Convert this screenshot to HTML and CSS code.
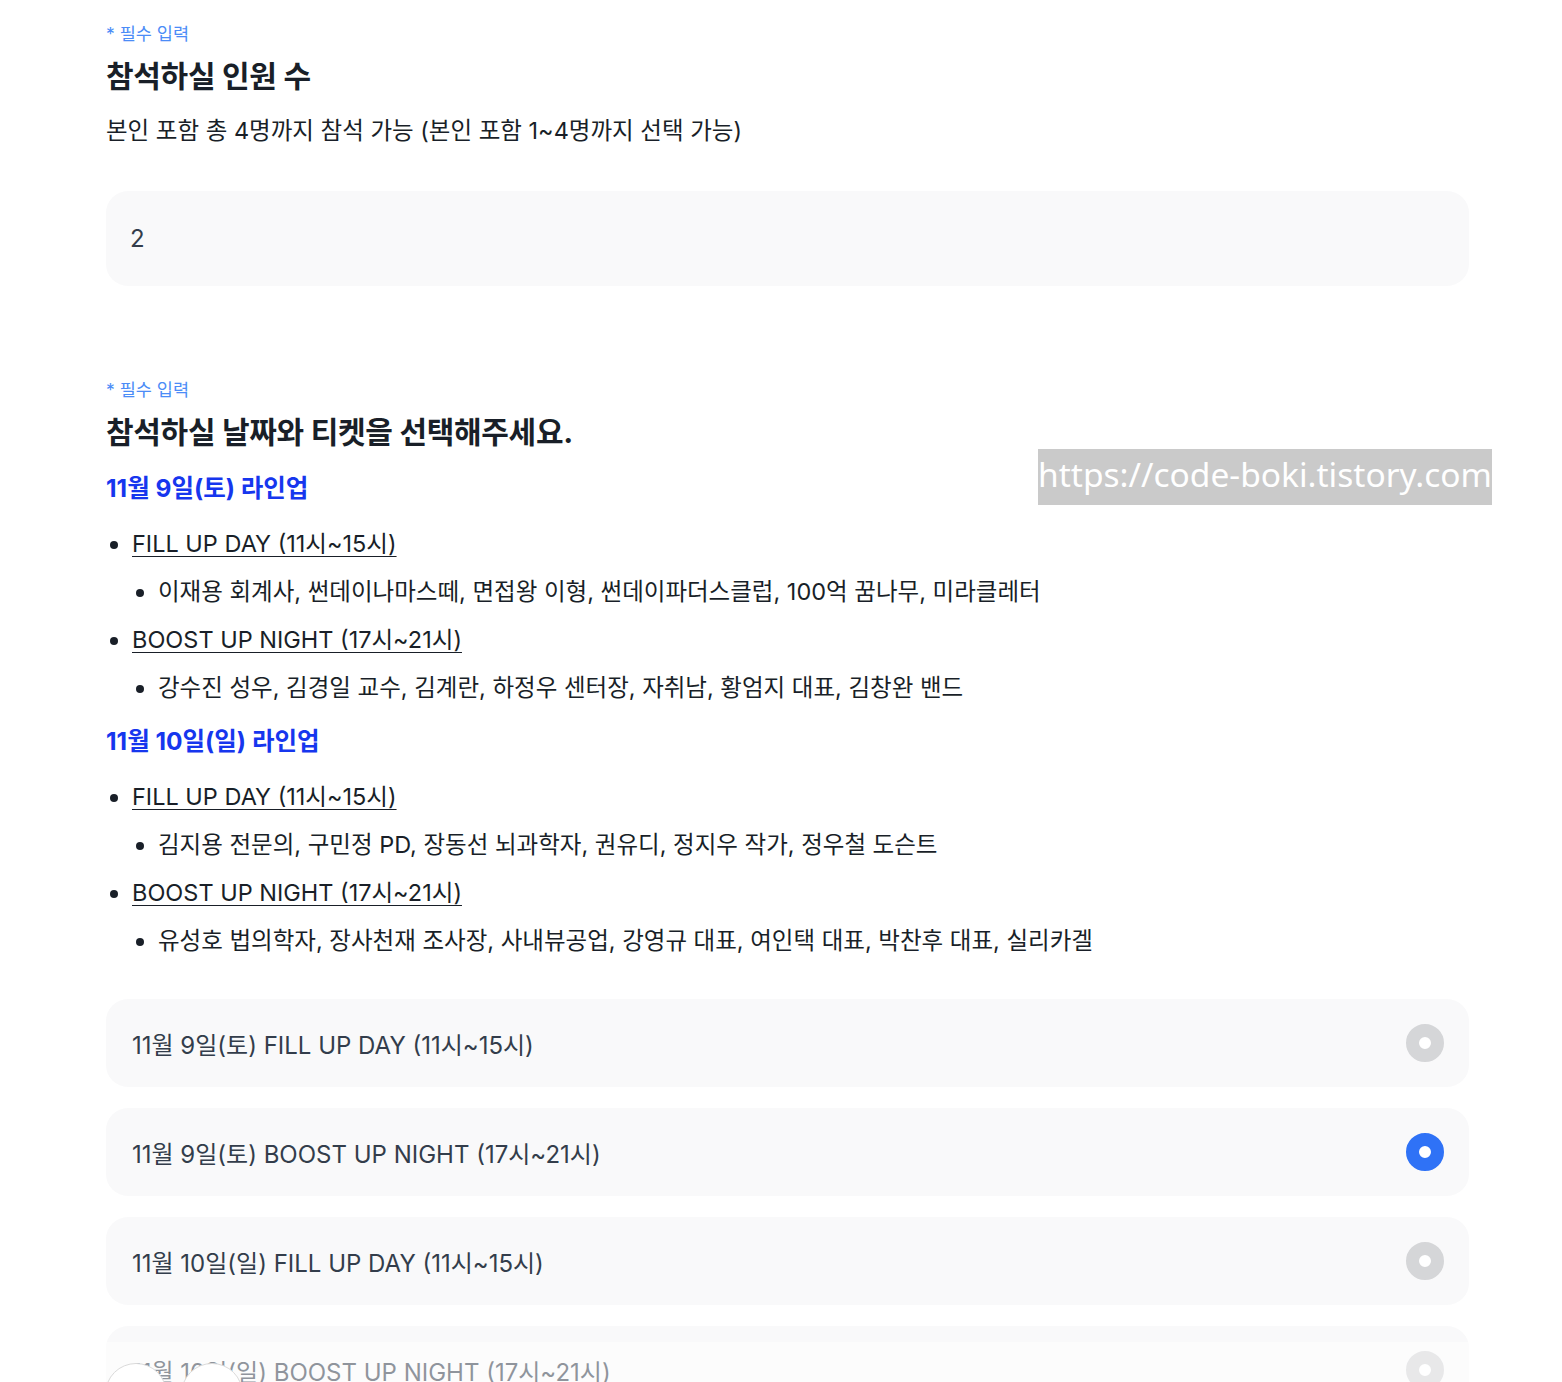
FILE: index.html
```html
<!DOCTYPE html>
<html lang="ko">
<head>
    <meta charset="UTF-8">
    <meta name="viewport" content="width=device-width, initial-scale=1.0">
    <title>참석 신청</title>
    <link rel="stylesheet" href="styles.css">
</head>
<body>
    <div class="form">
        <section class="form-section">
            <div class="form-required">* 필수 입력</div>
            <h2 class="form-title">참석하실 인원 수</h2>
            <p class="form-desc">본인 포함 총 4명까지 참석 가능 (본인 포함 1~4명까지 선택 가능)</p>
            <div class="form-input">2</div>
        </section>

        <section class="form-section second">
            <div class="form-required">* 필수 입력</div>
            <h2 class="form-title">참석하실 날짜와 티켓을 선택해주세요.</h2>

            <h3 class="lineup-title">11월 9일(토) 라인업</h3>
            <ul class="lineup-list">
                <li><u>FILL UP DAY (11시~15시)</u>
                    <ul><li>이재용 회계사, 썬데이나마스떼, 면접왕 이형, 썬데이파더스클럽, 100억 꿈나무, 미라클레터</li></ul>
                </li>
                <li><u>BOOST UP NIGHT (17시~21시)</u>
                    <ul><li>강수진 성우, 김경일 교수, 김계란, 하정우 센터장, 자취남, 황엄지 대표, 김창완 밴드</li></ul>
                </li>
            </ul>

            <h3 class="lineup-title">11월 10일(일) 라인업</h3>
            <ul class="lineup-list">
                <li><u>FILL UP DAY (11시~15시)</u>
                    <ul><li>김지용 전문의, 구민정 PD, 장동선 뇌과학자, 권유디, 정지우 작가, 정우철 도슨트</li></ul>
                </li>
                <li><u>BOOST UP NIGHT (17시~21시)</u>
                    <ul><li>유성호 법의학자, 장사천재 조사장, 사내뷰공업, 강영규 대표, 여인택 대표, 박찬후 대표, 실리카겔</li></ul>
                </li>
            </ul>

            <div class="ticket-options">
                <div class="ticket-option">
                    <span>11월 9일(토) FILL UP DAY (11시~15시)</span>
                    <span class="radio"></span>
                </div>
                <div class="ticket-option">
                    <span>11월 9일(토) BOOST UP NIGHT (17시~21시)</span>
                    <span class="radio checked"></span>
                </div>
                <div class="ticket-option">
                    <span>11월 10일(일) FILL UP DAY (11시~15시)</span>
                    <span class="radio"></span>
                </div>
                <div class="ticket-option">
                    <span>11월 10일(일) BOOST UP NIGHT (17시~21시)</span>
                    <span class="radio"></span>
                </div>
            </div>
        </section>
    </div>

    <div class="watermark">https://code-boki.tistory.com</div>

    <div class="bottom-fade"></div>
    <div class="float-buttons">
        <div class="float-button"></div>
        <div class="float-button"></div>
    </div>
</body>
</html>
```

FILE: styles.css
```css
* {
    box-sizing: border-box;
    margin: 0;
    padding: 0;
}

body {
    background: #fff;
    color: #191f28;
    font-family: Inter, 'Noto Sans CJK KR', sans-serif;
    overflow: hidden;
}

.form {
    width: 1363px;
    margin-left: 106px;
    padding-top: 22px;
}

.form-section.second {
    margin-top: 92px;
}

.form-required {
    font-size: 17.5px;
    line-height: 24px;
    color: #4b8cf7;
}

.form-title {
    margin-top: 10px;
    font-size: 30px;
    line-height: 40px;
    font-weight: 700;
    color: #191f28;
    letter-spacing: -0.3px;
}

.form-desc {
    margin-top: 19px;
    font-size: 23.5px;
    line-height: 32px;
    color: #191f28;
}

.form-input {
    margin-top: 44px;
    height: 95px;
    padding: 0 24px;
    display: flex;
    align-items: center;
    background: #f9f9fa;
    border-radius: 22px;
    font-size: 24px;
    color: #333d4b;
}

/* Lineup */
.lineup-title {
    margin-top: 18px;
    font-size: 24.5px;
    line-height: 36px;
    font-weight: 700;
    color: #1636ee;
}

.lineup-list + .lineup-title {
    margin-top: 19px;
}

.lineup-list {
    padding-top: 6px;
    padding-left: 26px;
    font-size: 23.5px;
    line-height: 32px;
    color: #191f28;
}

.lineup-list li {
    margin-top: 16px;
}

.lineup-list ul {
    padding-left: 26px;
    list-style: disc;
}

.lineup-list u {
    text-underline-offset: 4px;
    text-decoration-thickness: 1px;
}

/* Ticket options */
.ticket-options {
    margin-top: 42px;
    display: flex;
    flex-direction: column;
    gap: 21px;
}

.ticket-option {
    height: 88px;
    padding: 0 25px 0 26px;
    display: flex;
    align-items: center;
    justify-content: space-between;
    background: #f9f9fa;
    border-radius: 22px;
    font-size: 24px;
    color: #333d4b;
}

.radio {
    width: 38px;
    height: 38px;
    border-radius: 50%;
    border: 13px solid #d5d6d8;
    background: #fff;
}

.radio.checked {
    border-color: #2f72f6;
}

/* Overlays */
.watermark {
    position: absolute;
    left: 1038px;
    top: 449px;
    width: 454px;
    height: 56px;
    background: #cacaca;
    color: #fff;
    font-family: 'Noto Sans', sans-serif;
    font-size: 33.5px;
    line-height: 50px;
    text-align: center;
    white-space: nowrap;
}

.bottom-fade {
    position: fixed;
    left: 0;
    right: 0;
    bottom: 0;
    height: 40px;
    background: rgba(255, 255, 255, 0.45);
}

.float-buttons {
    position: fixed;
    left: 105px;
    top: 1363px;
    display: flex;
    gap: 14px;
}

.float-button {
    width: 62px;
    height: 62px;
    border-radius: 50%;
    background: #fff;
    border: 1px solid #d9d9d9;
}
```
